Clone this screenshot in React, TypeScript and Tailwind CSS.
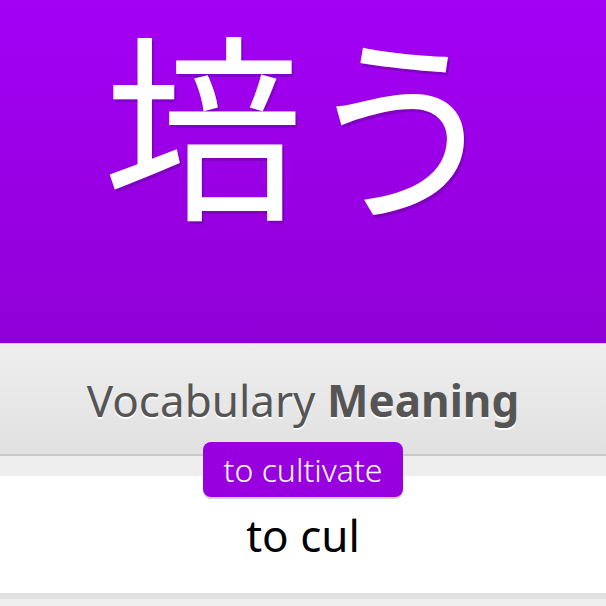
import React from 'react';

export default function App() {
  return (
    <div className="w-[606px] h-[606px] overflow-hidden bg-white font-['Noto_Sans','Open_Sans',sans-serif]">
      {/* Character banner */}
      <div className="h-[343px] bg-gradient-to-b from-[#a300f5] to-[#9000d6] flex items-start justify-center pt-[2px]">
        <span
          lang="ja"
          className="text-white text-[200px] leading-[1.16] font-['Noto_Sans_CJK_JP',sans-serif] font-normal [text-shadow:2px_3px_0_rgba(80,0,120,0.35)]"
        >
          培う
        </span>
      </div>

      {/* Section heading */}
      <div className="h-[113px] border-t border-[#d4d4d4] border-b-2 border-b-[#c9c9c9] bg-gradient-to-b from-[#eeeeee] to-[#e1e1e1] flex items-center justify-center pt-[2px]">
        <h2 className="text-[44px] text-[#555] [text-shadow:0_2px_0_#fff]">
          Vocabulary <span className="font-bold">Meaning</span>
        </h2>
      </div>

      {/* Answer area */}
      <div className="relative">
        <div className="h-[20px] bg-[#eeeeee]" />
        <div className="h-[117px] bg-white flex items-center justify-center">
          <span className="text-[44px] text-black">to cul</span>
        </div>
        <div className="h-[6px] bg-[#e0e0e0]" />
        <div className="h-[10px] bg-[#efefef]" />

        <div className="absolute left-0 right-0 top-[-14px] flex justify-center">
          <div className="h-[55px] px-[21px] rounded-[8px] bg-[#9900e0] text-white text-[32px] font-light flex items-center shadow-[0_2px_0_rgba(0,0,0,0.18)]">
            to cultivate
          </div>
        </div>
      </div>
    </div>
  );
}
